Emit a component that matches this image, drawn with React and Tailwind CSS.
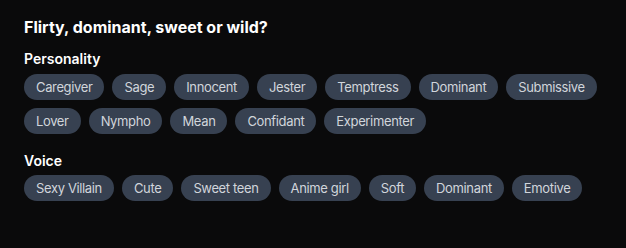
const personality = [
  "Caregiver",
  "Sage",
  "Innocent",
  "Jester",
  "Temptress",
  "Dominant",
  "Submissive",
  "Lover",
  "Nympho",
  "Mean",
  "Confidant",
  "Experimenter",
];

const voice = ["Sexy Villain", "Cute", "Sweet teen", "Anime girl", "Soft", "Dominant", "Emotive"];

function Chip({ label }) {
  return (
    <button className="h-[26px] rounded-full bg-[#374151] px-3 text-[13px] tracking-[-0.36px] text-[#d1d5db] leading-[26px]">
      {label}
    </button>
  );
}

function App() {
  return (
    <div className="min-h-screen bg-[#0a0a0b] px-6 pt-[15px] font-['Inter',sans-serif]">
      <h2 className="text-base font-bold leading-6 text-white">Flirty, dominant, sweet or wild?</h2>
      <div className="mt-[10px]">
        <h3 className="text-sm font-semibold leading-5 text-white">Personality</h3>
        <div className="mt-[5px] flex flex-wrap gap-2">
          {personality.map((p) => (
            <Chip key={p} label={p} />
          ))}
        </div>
      </div>
      <div className="mt-[17px]">
        <h3 className="text-sm font-semibold leading-5 text-white">Voice</h3>
        <div className="mt-1 flex flex-wrap gap-2">
          {voice.map((v) => (
            <Chip key={v} label={v} />
          ))}
        </div>
      </div>
    </div>
  );
}

export default App;
